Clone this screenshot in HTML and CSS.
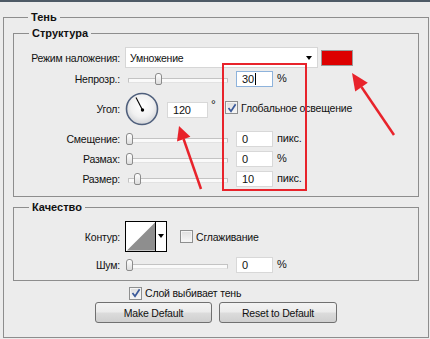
FILE: index.html
```html
<!DOCTYPE html>
<html lang="ru">
<head>
  <meta charset="UTF-8">
  <title>Стиль слоя — Тень</title>
  <link rel="stylesheet" href="styles.css">
</head>
<body>
  <div class="topline"></div>

  <fieldset class="group outer">
    <legend>Тень</legend>

    <fieldset class="group struct">
      <legend>Структура</legend>
      <div class="rows">
        <!-- Режим -->
        <span class="lbl">Режим наложения:</span>
        <div class="ctrl">
          <div class="select"><span>Умножение</span><i class="drop"></i></div>
          <span class="swatch"></span>
        </div>

        <!-- Непрозрачность -->
        <span class="lbl">Непрозр.:</span>
        <div class="ctrl">
          <div class="slider"><span class="thumb" style="left: 30px"></span></div>
          <div class="num focus">30<span class="caret"></span></div>
          <span class="unit">%</span>
        </div>

        <!-- Угол -->
        <span class="lbl">Угол:</span>
        <div class="ctrl">
          <svg class="dial" width="34" height="34" viewBox="0 0 34 34">
            <defs>
              <radialGradient id="dialFill" cx="50%" cy="40%" r="60%">
                <stop offset="0" stop-color="#ffffff"/>
                <stop offset="0.6" stop-color="#f1f1f1"/>
                <stop offset="1" stop-color="#d2d4d8"/>
              </radialGradient>
            </defs>
            <circle cx="17" cy="17" r="15.5" fill="url(#dialFill)" stroke="#4f5f7c" stroke-width="1.6"/>
            <line x1="17.5" y1="18" x2="11" y2="5.5" stroke="#000" stroke-width="1.1"/>
            <circle cx="17.5" cy="18" r="1.7" fill="#000"/>
          </svg>
          <div class="num wide">120</div>
          <span class="deg">°</span>
          <span class="check on"><svg width="10" height="10" viewBox="0 0 10 10"><path d="M1.5 5 L4 8.3 L8.6 1.2" fill="none" stroke="#3b5a9a" stroke-width="1.7"/></svg></span>
          <span class="check-lbl">Глобальное освещение</span>
        </div>

        <!-- Смещение -->
        <span class="lbl">Смещение:</span>
        <div class="ctrl">
          <div class="slider"><span class="thumb" style="left: 1px"></span></div>
          <div class="num">0</div>
          <span class="unit">пикс.</span>
        </div>

        <!-- Размах -->
        <span class="lbl">Размах:</span>
        <div class="ctrl">
          <div class="slider"><span class="thumb" style="left: 1px"></span></div>
          <div class="num">0</div>
          <span class="unit">%</span>
        </div>

        <!-- Размер -->
        <span class="lbl">Размер:</span>
        <div class="ctrl">
          <div class="slider"><span class="thumb" style="left: 9px"></span></div>
          <div class="num">10</div>
          <span class="unit">пикс.</span>
        </div>
      </div>
    </fieldset>

    <fieldset class="group quality">
      <legend>Качество</legend>
      <div class="rows">
        <span class="lbl">Контур:</span>
        <div class="ctrl">
          <div class="contour">
            <svg class="curve" width="30" height="29" viewBox="0 0 30 29">
              <rect width="30" height="29" fill="#fff"/>
              <polygon points="1,29 30,0 30,29" fill="#8e8e8e"/>
            </svg>
            <span class="contour-drop"><i class="drop"></i></span>
          </div>
          <span class="check"></span>
          <span class="check-lbl">Сглаживание</span>
        </div>

        <span class="lbl">Шум:</span>
        <div class="ctrl">
          <div class="slider"><span class="thumb" style="left: 1px"></span></div>
          <div class="num">0</div>
          <span class="unit">%</span>
        </div>
      </div>
    </fieldset>

    <div class="knockout">
      <span class="check on"><svg width="10" height="10" viewBox="0 0 10 10"><path d="M1.5 5 L4 8.3 L8.6 1.2" fill="none" stroke="#3b5a9a" stroke-width="1.7"/></svg></span>
      <span class="check-lbl">Слой выбивает тень</span>
    </div>

    <div class="buttons">
      <button class="btn make">Make Default</button>
      <button class="btn reset">Reset to Default</button>
    </div>
  </fieldset>

  <!-- красные пометки поверх диалога -->
  <svg class="marks" width="430" height="339" viewBox="0 0 430 339">
    <rect x="223" y="64" width="83" height="126" fill="none" stroke="#e8232b" stroke-width="2"/>
    <line x1="201" y1="189" x2="183.6" y2="139" stroke="#e8232b" stroke-width="2.5"/>
    <polygon points="179,126 190.4,136.8 177,141.6" fill="#e8232b"/>
    <line x1="394" y1="135" x2="361.5" y2="87" stroke="#e8232b" stroke-width="2.5"/>
    <polygon points="352,73 367.8,82.8 355.2,91.4" fill="#e8232b"/>
  </svg>
</body>
</html>
```

FILE: styles.css
```css
* {
  box-sizing: border-box;
}
body {
  margin: 0;
  width: 430px;
  height: 339px;
  overflow: hidden;
  position: relative;
  background: #ececec;
  font-family: "Liberation Sans", Arial, sans-serif;
  font-size: 10.5px;
  letter-spacing: -0.2px;
  color: #111;
}
.topline {
  height: 2px;
  background: #4e5a66;
}

/* группы */
.group {
  margin: 0;
  padding: 0;
  min-width: 0;
  border: 1px solid #8d8d8d;
}
.group > legend {
  margin-left: 15px;
  padding: 0 3px;
  font-size: 11px;
  font-weight: bold;
  letter-spacing: 0;
  line-height: 14px;
}
.outer {
  margin: 8px 1px 0 3px;
  padding: 2px 9px 14px;
}
.quality {
  margin-top: 3px;
}

/* строки */
.rows {
  display: grid;
  grid-template-columns: 106px 1fr;
  column-gap: 5px;
  align-items: center;
}
.struct .rows {
  padding: 7px 0;
  grid-template-rows: 21px 21px 40px 20px 20px 20px;
}
.quality .rows {
  padding: 7px 0 2px;
  grid-template-rows: 31px 26px;
}
.lbl {
  text-align: right;
  white-space: nowrap;
}
.ctrl {
  display: flex;
  align-items: center;
  height: 100%;
}

/* выпадающий список */
.select {
  width: 193px;
  height: 21px;
  display: flex;
  align-items: center;
  justify-content: space-between;
  padding: 0 5px 0 4px;
  background: #fff;
  border: 1px solid #d6d6d6;
}
.drop {
  width: 0;
  height: 0;
  border-left: 3.5px solid transparent;
  border-right: 3.5px solid transparent;
  border-top: 4px solid #000;
}
.swatch {
  width: 32px;
  height: 16px;
  margin-left: 3px;
  background: #dd0000;
  border: 1px solid #9a9a9a;
}

/* ползунок */
.slider {
  position: relative;
  width: 103px;
  height: 12px;
  margin-right: 8px;
}
.slider::before {
  content: "";
  position: absolute;
  left: 3px;
  right: 0;
  top: 5px;
  height: 3px;
  background: #fafafa;
  border: 1px solid #c3c3c3;
  border-bottom-color: #e2e2e2;
}
.thumb {
  position: absolute;
  top: 0;
  width: 7px;
  height: 12px;
  border: 1px solid #8b8b8b;
  border-radius: 3px 3px 2px 2px;
  background: linear-gradient(#ffffff, #dcdcdc);
}

/* поля ввода */
.num {
  width: 37px;
  height: 16px;
  padding-left: 5px;
  line-height: 14px;
  font-size: 11px;
  background: #fff;
  border: 1px solid #d8d8d8;
}
.num.focus {
  border-color: #8eb3dc;
}
.num.wide {
  width: 41px;
  margin-left: 8px;
  margin-top: 1px;
}
.caret {
  display: inline-block;
  width: 1px;
  height: 12px;
  margin-left: 1px;
  vertical-align: -2px;
  background: #000;
}
.unit {
  margin-left: 4px;
  margin-top: -2px;
  font-size: 11px;
}
.deg {
  width: 17px;
  padding-left: 3px;
  align-self: flex-start;
  margin-top: 9px;
  font-size: 12px;
}

/* флажки */
.check {
  width: 13px;
  height: 13px;
  display: flex;
  align-items: center;
  justify-content: center;
  border: 1px solid #8e8f8f;
  background: linear-gradient(#dedede, #f8f8f8);
  box-shadow: inset 0 0 0 1px #f4f4f4;
}
.check-lbl {
  margin-left: 3px;
  white-space: nowrap;
}
.struct .check {
  margin-top: -3px;
}
.struct .check-lbl {
  margin-top: -3px;
}

/* контур */
.contour {
  width: 42px;
  height: 31px;
  display: flex;
  border: 1px solid #000;
  background: #fff;
}
.curve {
  display: block;
  border-right: 1px solid #000;
  width: 30px;
}
.contour-drop {
  flex: 1;
  display: flex;
  align-items: center;
  justify-content: center;
  padding-bottom: 2px;
}
.quality .check {
  margin-left: 13px;
}

/* нижняя часть */
.knockout {
  display: flex;
  align-items: center;
  height: 14px;
  margin-top: 5px;
  padding-left: 116px;
}
.buttons {
  display: flex;
  justify-content: center;
  gap: 7px;
  margin-top: 2px;
}
.btn {
  height: 21px;
  padding: 0;
  font-family: inherit;
  font-size: 10.5px;
  letter-spacing: -0.2px;
  color: #111;
  border: 1px solid #707070;
  border-radius: 3px;
  background: linear-gradient(#f3f3f3 0%, #ebebeb 48%, #dcdcdc 52%, #cfcfcf 100%);
}
.make {
  width: 117px;
}
.reset {
  width: 118px;
}

/* пометки */
.marks {
  position: absolute;
  top: 0;
  left: 0;
  pointer-events: none;
}
```
